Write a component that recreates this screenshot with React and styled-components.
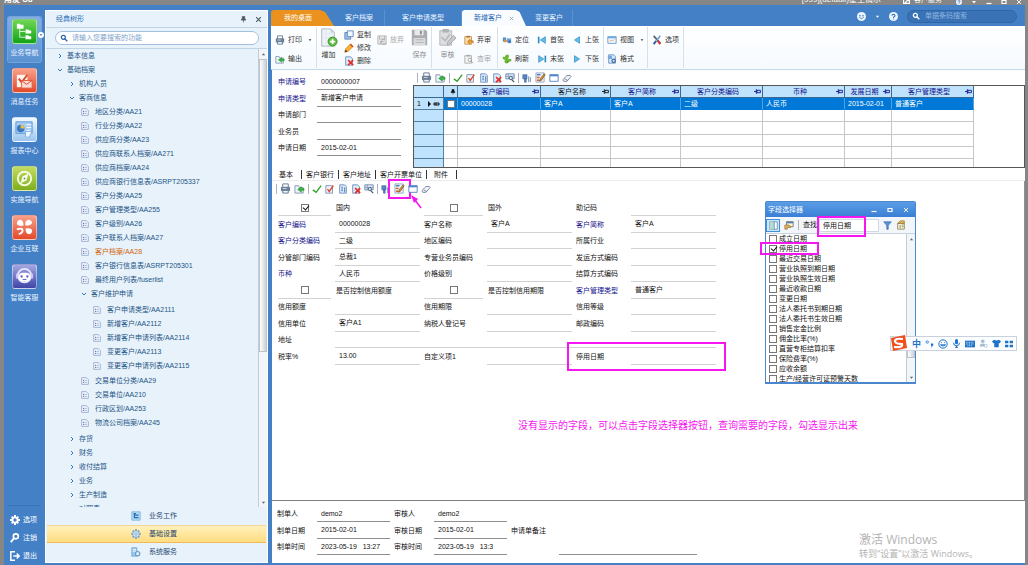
import React, { useId } from "react";
import styled, { createGlobalStyle, css } from "styled-components";

const GlobalStyle = createGlobalStyle`
    * {
        box-sizing: border-box;
    }
    html, body, #root {
        height: 100%;
        margin: 0;
    }
    body {
        font-family: "Liberation Sans", "Noto Sans CJK SC", sans-serif;
        font-size: 7px;
        line-height: 10px;
        color: #111;
        background: #868686;
        overflow: hidden;
    }
    button, input {
        font: inherit;
        color: inherit;
        border: 0;
        margin: 0;
        padding: 0;
        background: none;
        outline: none;
    }
    button {
        white-space: nowrap;
    }
    ul {
        list-style: none;
        margin: 0;
        padding: 0;
    }
    svg {
        display: block;
        flex: none;
    }
`;

//================================ Icons =================================

const doc = <path d="M2 1h6l2 2v8H2z" fill="#dcebfa" stroke="#6288bd" strokeWidth="1" />;

const shapes = {
    print: (
        <>
            <path d="M3 5V1h6v4" fill="#fff" stroke="#60738c" />
            <rect x="1" y="4" width="10" height="5" rx="1" fill="#6f8197" />
            <path d="M3 8h6v3H3z" fill="#eaf4ff" stroke="#60738c" />
            <path d="M3 6h4" stroke="#cfdbe8" />
        </>
    ),
    export: (
        <>
            <path d="M1 3h4l1 2h4v6H1z" fill="#edf4fb" stroke="#8296ae" />
            <path d="M11 6H8V4L4 7l4 3V8h3z" fill="#35b53b" stroke="#168226" strokeWidth="0.5" />
        </>
    ),
    copy: (
        <>
            <path d="M1 3h7v8H1z" fill="#a5c2e5" stroke="#557fb5" />
            <path d="M4 1h7v7H4z" fill="#eff7ff" stroke="#557fb5" />
        </>
    ),
    pencil: (
        <>
            <path d="M1 11l1-4 6-6 3 3-6 6z" fill="#ffb52b" stroke="#b4680f" strokeWidth="0.8" />
            <path d="M7 2l3 3 1-1-3-3z" fill="#d64534" />
            <path d="M1 11l1-3 2 2z" fill="#333" />
        </>
    ),
    delete: (
        <>
            {doc}
            <path d="M5 5l6 6M11 5l-6 6" stroke="#e5302a" strokeWidth="2" />
        </>
    ),
    abandon: (
        <>
            <path d="M1 1h10v10H1z" fill="#e6e6e6" stroke="#b4b4b4" />
            <path d="M3 1v4h6V1M4 11V8h5" fill="none" stroke="#b4b4b4" />
            <path d="M10 6a3 3 0 1 0 1 3" fill="none" stroke="#a4a4a4" />
        </>
    ),
    unaudit: (
        <>
            <path d="M1 2h8v9H1z" fill="#fbe3bb" stroke="#c98632" />
            <path d="M3 1h4v2H3z" fill="#a8703a" />
            <path d="M11 10V7H7V5L4 8l3 3V9" fill="#ee9a29" stroke="#9d5d15" strokeWidth="0.6" />
        </>
    ),
    checkAudit: (
        <>
            <path d="M1 2h8v9H1z" fill="#f1f1f1" stroke="#aaa" />
            <path d="M3 1h4v2H3z" fill="#aaa" />
            <circle cx="7" cy="7" r="2" fill="#fff" stroke="#999" />
            <path d="M8 8l3 3" stroke="#999" />
        </>
    ),
    locate: (
        <>
            <path d="M1 3h4v5H1z" fill="#4b8fd0" />
            <path d="M6 4h5v5H6z" fill="#6ea9de" />
            <circle cx="4" cy="7" r="2" fill="#e69133" />
            <circle cx="9" cy="8" r="2" fill="#3f7fc2" />
        </>
    ),
    refresh: (
        <>
            <path d="M1 6V3l2 1 2-3h3v3L6 5 5 6z" fill="#65b52d" />
            <path d="M11 6v3L9 8l-2 3H4V8l2-1 1-1z" fill="#509e26" />
            <path d="M2 5l8 3M7 2L4 10" stroke="#6dbb35" strokeWidth="3" />
        </>
    ),
    first: (
        <>
            <path d="M2 2v8" stroke="#2b8fc9" strokeWidth="2" />
            <path d="M10 2v8L4 6z" fill="#63bdea" stroke="#2585c0" strokeWidth="0.8" />
        </>
    ),
    last: (
        <>
            <path d="M10 2v8" stroke="#2b8fc9" strokeWidth="2" />
            <path d="M2 2v8l6-4z" fill="#63bdea" stroke="#2585c0" strokeWidth="0.8" />
        </>
    ),
    prev: <path d="M9 2v8L3 6z" fill="#63bdea" stroke="#2585c0" strokeWidth="0.8" />,
    next: <path d="M3 2v8l6-4z" fill="#63bdea" stroke="#2585c0" strokeWidth="0.8" />,
    view: (
        <>
            <path d="M1 2h10v8H1z" fill="#f3f9ff" stroke="#5d94cd" />
            <path d="M1 2h10v2H1z" fill="#6daae0" />
            <path d="M3 8l2-2 2 1 2-2" fill="none" stroke="#e2a548" />
        </>
    ),
    format: (
        <>
            {doc}
            <path d="M1 2h5v4H1z" fill="#7aa8dc" />
            <circle cx="8" cy="8" r="2" fill="#dcebfa" stroke="#426d9f" strokeWidth="1.5" />
        </>
    ),
    tools: (
        <>
            <path d="M2 1l8 9" stroke="#56616e" strokeWidth="2" />
            <path d="M10 1L6 6" stroke="#71a2d4" strokeWidth="2" />
            <path d="M5 7l-3 4" stroke="#3065a8" strokeWidth="2.5" />
            <path d="M7 7l3 4" stroke="#d63838" strokeWidth="2.5" />
        </>
    ),
    tick: <path d="M1 7l4 3 6-8" fill="none" stroke="#36a02c" strokeWidth="1.7" />,
    tickDoc: (
        <>
            <path d="M1 2h8v9H1z" fill="#eef4fc" stroke="#738cab" />
            <path d="M3 6l2 3 5-7" fill="none" stroke="#dc4430" strokeWidth="1.6" />
        </>
    ),
    docUp: (
        <>
            {doc}
            <path d="M4 4h2M4 6h2M4 8h2M8 4v6" stroke="#376fb4" strokeWidth="1" />
        </>
    ),
    searchTable: (
        <>
            <path d="M1 1h10v6H1z" fill="#e6f0fb" stroke="#5f7da3" />
            <path d="M1 4h10M4 1v6" stroke="#5f7da3" strokeWidth="0.7" />
            <circle cx="7" cy="6" r="2" fill="#cde5fa" stroke="#45566b" />
            <path d="M8 8l3 3" stroke="#45566b" strokeWidth="1.5" />
        </>
    ),
    attach: (
        <>
            <path d="M1 2h5v5H1zM3 7h2v4H3z" fill="#5a86c5" stroke="#35609d" strokeWidth="0.7" />
            <path d="M8 4v7M10 5v6" stroke="#5a78a4" />
        </>
    ),
    picker: (
        <>
            <path d="M1 1h9v10H1z" fill="#eef4fc" stroke="#93a7c4" />
            <path d="M2 3h4" stroke="#4477b8" strokeWidth="1.5" />
            <path d="M2 6h3M2 9h3" stroke="#d3662e" strokeWidth="1.5" />
            <path d="M5 10l1-3 4-5 1 1-4 6z" fill="#e5a12d" stroke="#74461d" strokeWidth="0.8" />
        </>
    ),
    window: (
        <>
            <path d="M1 2h10v8H1z" fill="#fff" stroke="#4a78bb" />
            <path d="M1 2h10v2H1z" fill="#4e86d2" />
        </>
    ),
    eraser: <path d="M1 8l5-5h4l1 1-5 6H2zM3 7l4 2" fill="#f3f5fb" stroke="#5c6a8b" strokeWidth="0.9" />,
    list: (
        <>
            <path d="M1 1h7l3 3v7H1z" fill="#f5f9ff" stroke="#7a92c0" strokeWidth="1" />
            <path d="M3 5h2M3 8h2" stroke="#705a86" strokeWidth="1.5" />
            <path d="M6 5h3M6 8h3" stroke="#6fa1db" strokeWidth="1" />
        </>
    ),
    right: <path d="M4 2l4 4-4 4" fill="none" stroke="#2f77c4" strokeWidth="2" />,
    down: <path d="M2 4l4 4 4-4" fill="none" stroke="#2f77c4" strokeWidth="2" />,
    caret: <path d="M2 4h8L6 9z" fill="currentColor" />,
    caretUp: <path d="M2 8h8L6 3z" fill="currentColor" />,
    close: <path d="M2 2l8 8M10 2l-8 8" fill="none" stroke="currentColor" strokeWidth="1.8" />,
    pin: <path d="M4 1h4v4h1l1 2H2l1-2h1zM6 7v4" fill="currentColor" stroke="currentColor" strokeWidth="1.2" />,
    sidePin: <path d="M0 6h4M4 2v8M5 4h6v4H5z" fill="none" stroke="currentColor" strokeWidth="1.5" />,
    search: (
        <>
            <circle cx="5" cy="5" r="3" fill="none" stroke="currentColor" strokeWidth="1.8" />
            <path d="M7 7l4 4" stroke="currentColor" strokeWidth="2" />
        </>
    ),
    gear: (
        <>
            <path d="M6 0v12M0 6h12M2 2l8 8M10 2l-8 8" stroke="currentColor" strokeWidth="2.4" />
            <circle cx="6" cy="6" r="3" fill="none" stroke="currentColor" strokeWidth="2.5" />
            <circle cx="6" cy="6" r="2" fill="#4480c6" />
        </>
    ),
    key: (
        <>
            <circle cx="7" cy="4" r="3" fill="none" stroke="currentColor" strokeWidth="2" />
            <path d="M5 6l-4 5" stroke="currentColor" strokeWidth="2.4" />
        </>
    ),
    exit: <path d="M6 1H1v10h5M4 6h7M8 3l3 3-3 3" fill="none" stroke="currentColor" strokeWidth="1.8" />,
    blueGear: (
        <>
            <path d="M6 0v12M0 6h12M2 2l8 8M10 2l-8 8" stroke="#6f9fcb" strokeWidth="2" />
            <circle cx="6" cy="6" r="4" fill="#d9ecfb" stroke="#6f9fcb" />
            <circle cx="6" cy="6" r="1.5" fill="#fff" stroke="#6f9fcb" />
        </>
    ),
    work: (
        <>
            <path d="M1 1h10v10H1z" fill="#b7daf5" stroke="#78b1df" />
            <path d="M3 3h3M4 3v5h3M4 5h3M7 5h2M7 8h2" fill="none" stroke="#226bb0" strokeWidth="1.4" />
        </>
    ),
    service: (
        <>
            <path d="M1 1h6v10H1z" fill="#9bc8ec" stroke="#6aa3d6" />
            <path d="M2 3h4M2 5h4" stroke="#fff" />
            <circle cx="8" cy="8" r="2.6" fill="#dceffc" stroke="#6d9dc8" strokeWidth="1.4" />
        </>
    ),
    smile: (
        <>
            <circle cx="6" cy="6" r="6" fill="#eaf4ff" />
            <circle cx="4" cy="5" r="1" fill="#3569a5" />
            <circle cx="8" cy="5" r="1" fill="#3569a5" />
            <path d="M3 7q3 4 6 0" fill="none" stroke="#3569a5" />
        </>
    ),
    help: (
        <>
            <circle cx="6" cy="6" r="6" fill="#eaf4ff" />
            <path d="M4 5q0-2 2-2t2 2q0 1-2 2v1M6 9v1" fill="none" stroke="#3569a5" strokeWidth="1.4" />
        </>
    ),
    columns: (
        <>
            <path d="M1 1h10v10H1z" fill="#fff" stroke="#57809f" />
            <path d="M1 1h6v10H1z" fill="#b3dcd5" />
            <path d="M7 1v10" stroke="#57809f" />
        </>
    ),
    props: (
        <>
            <path d="M3 2h8v6H3z" fill="#fff1c9" stroke="#7d7457" />
            <path d="M3 2h8v2H3z" fill="#4e7ec4" />
            <path d="M1 6h5l2 3H4v2H1z" fill="#e3b161" stroke="#89602a" strokeWidth="0.7" />
        </>
    ),
    filter: <path d="M1 1h10L7 6v5H5V6z" fill="#5c92da" stroke="#345fa5" strokeWidth="0.8" />,
    note: (
        <>
            <path d="M2 4h8v7H2z" fill="#f7f0d5" stroke="#8b8258" />
            <path d="M2 4l3-3h5v3z" fill="#e8ba4e" stroke="#81662b" strokeWidth="0.7" />
            <path d="M5 6v4M7 6h2M7 8h2" stroke="#7a8c6a" />
        </>
    ),
    max: <path d="M2 3h8v6H2z" fill="none" stroke="currentColor" strokeWidth="2.4" />,
    min: <path d="M1 9h10" stroke="currentColor" strokeWidth="2.4" />,
    service2: <path d="M1 1h10v10H1zM3 11l6-7M6 4h3v3" fill="none" stroke="currentColor" strokeWidth="2" />,
    punct: (
        <>
            <circle cx="3" cy="4" r="1.6" fill="none" stroke="#1c73c9" />
            <path d="M8 6h3v2l-2 3H8l1-2H8z" fill="#1c73c9" />
        </>
    ),
    face: (
        <>
            <circle cx="6" cy="6" r="5" fill="none" stroke="#1c73c9" strokeWidth="1.2" />
            <path d="M4 4v1M8 4v1M3 7q3 3 6 0z" fill="none" stroke="#1c73c9" strokeWidth="1.2" />
        </>
    ),
    mic: (
        <>
            <rect x="4" y="0" width="4" height="7" rx="2" fill="#1c73c9" />
            <path d="M2 5q0 4 4 4t4-4M6 9v3M4 11h4" fill="none" stroke="#1c73c9" strokeWidth="1.3" />
        </>
    ),
    keyboard: (
        <>
            <rect x="0" y="2" width="12" height="8" fill="#1c73c9" />
            <path d="M1 4h10M1 6h10M3 8h6" stroke="#fff" strokeDasharray="1 1" />
        </>
    ),
    person: (
        <>
            <circle cx="5" cy="3" r="2.4" fill="#a6bbd1" />
            <path d="M1 10q0-4 4-4t4 2v2z" fill="#a6bbd1" />
            <circle cx="9" cy="9" r="2" fill="#fff" stroke="#a6bbd1" />
        </>
    ),
    shirt: <path d="M0 3l3-2q3 2 6 0l3 2-2 3-1-1v6H3V5L2 6z" fill="#1c73c9" />,
    apps: <path d="M0 1h5v4H0zM7 1h5v4H7zM0 7h5v4H0zM7 7h5v4H7z" fill="#1c73c9" />,
};

const Icon = ({ name, size = 10 }) => (
    <svg width={size} height={size} viewBox="0 0 12 12" aria-hidden="true">
        {shapes[name]}
    </svg>
);

const bigShapes = {
    add: (
        <>
            <path d="M3 1h10l4 4v15H3z" fill="#eef3f8" stroke="#a3afbd" />
            <path d="M3 6h14M3 11h14M8 1v19" stroke="#e2e8ee" />
            <path d="M13 1v4h4z" fill="#c4ced9" />
            <circle cx="15" cy="15" r="5" fill="#5cb93a" stroke="#3d922a" />
            <path d="M15 12v6M12 15h6" stroke="#fff" strokeWidth="2" />
        </>
    ),
    save: (
        <>
            <path d="M2 2h15l2 2v15H2z" fill="#a9acb1" />
            <path d="M5 2h10v6H5z" fill="#e8e9eb" />
            <path d="M11 3h2v4h-2z" fill="#888" />
            <path d="M4 11h13v8H4z" fill="#d9dbde" />
            <path d="M6 13h9M6 16h9" stroke="#b4b4b4" />
        </>
    ),
    audit: (
        <>
            <path d="M2 3h13v16H2z" fill="#dcdee1" stroke="#b3b6ba" />
            <path d="M5 1h7v4H5z" fill="#b0b3b7" />
            <path d="M4 10l4 4 5-7" fill="none" stroke="#bbb" strokeWidth="2" />
            <path d="M10 19l1-4 6-7 3 3-7 7z" fill="#c7c9cc" stroke="#a7a9ac" />
        </>
    ),
};

const BigIcon = ({ name }) => (
    <svg width="19" height="19" viewBox="0 0 21 21" aria-hidden="true">
        {bigShapes[name]}
    </svg>
);

//================================ Frame =================================

const Page = styled.div`
    height: 100vh;
    display: flex;
    flex-direction: column;
`;

const TitleBar = styled.header`
    height: 5px;
    padding: 0 6px 0 4px;
    display: flex;
    align-items: flex-end;
    gap: 22px;
    color: #fff;
    font-size: 8px;
    overflow: hidden;
    white-space: nowrap;
`;

const Brand = styled.span`
    flex: 1;
    font-weight: bold;
`;

const ServiceLink = styled.span`
    display: flex;
    align-items: center;
    gap: 4px;
    font-size: 7px;
`;

const WindowButtons = styled.div`
    display: flex;
    gap: 9px;
    margin-left: -8px;
`;

const Body = styled.div`
    flex: 1;
    min-height: 0;
    display: flex;
    margin: 0 3px 0 4px;
    background: #4480c6;
`;

//================================ Rail =================================

const Rail = styled.nav`
    width: 41px;
    flex: none;
    padding: 12px 4px 0;
    display: flex;
    flex-direction: column;
    gap: 4px;
    color: #fff;
`;

const RailItem = styled.button`
    position: relative;
    height: 45px;
    padding-top: 2px;
    display: flex;
    flex-direction: column;
    align-items: center;
    gap: 4px;
    border-radius: 2px;
    color: #eaf4ff;
    ${({ $active }) => $active && css`
        background: linear-gradient(#84afdf, #5c92d2);
        box-shadow: 0 0 0 1px #72a5dc;
    `}
`;

const RailTile = styled.span`
    width: 25px;
    height: 25px;
    display: flex;
    align-items: center;
    justify-content: center;
    border-radius: 3px;
    border: 1px solid rgba(255, 255, 255, 0.45);
    background: ${({ $bg }) => $bg};
`;

const RailHandle = styled.span`
    position: absolute;
    right: -3px;
    top: 15px;
    width: 6px;
    height: 6px;
    display: grid;
    place-items: center;
    border-radius: 50%;
    background: #fff;
    color: #2f6cb2;
`;

const RailFooter = styled.div`
    margin-top: auto;
    padding: 5px 0 0 2px;
    border-top: 1px solid #3b74b6;
`;

const RailLink = styled.button`
    height: 18px;
    display: flex;
    align-items: center;
    gap: 3px;
`;

const railShapes = [
    <>
        <path d="M3 3h3l1 1h3v4H3zM12 9h3l1 1h2v3h-6zM12 15h3l1 1h2v3h-6z" fill="#fff" />
        <path d="M6 8v9h6M6 11h6" fill="none" stroke="#d8f5d2" />
    </>,
    <>
        <path d="M3 5h11v13H3z" fill="#fff3ee" />
        <path d="M5 9l3 4 6-8" fill="none" stroke="#d84a2c" strokeWidth="2" />
        <path d="M8 11h11v8H8z" fill="#fbdad0" stroke="#e05c3c" />
        <path d="M8 11l5 4 6-4" fill="none" stroke="#d84a2c" />
    </>,
    <>
        <path d="M2 3h17v12H2z" fill="#a6cdf4" stroke="#5e98d6" />
        <circle cx="7" cy="10" r="4" fill="#3a79c5" />
        <path d="M7 10V6a4 4 0 0 1 4 4z" fill="#f0c043" />
        <path d="M13 6h5M13 9h5M13 12h4" stroke="#fff" />
        <path d="M12 13h7l-3 6h-4z" fill="#eef7ff" stroke="#7fb0e2" />
    </>,
    <>
        <circle cx="11" cy="11" r="7" fill="none" stroke="#f3fbdc" strokeWidth="2" />
        <path d="M15 6l-2 7-6 3 2-7z" fill="#fff" />
        <circle cx="11" cy="11" r="1" fill="#6d9a1c" />
    </>,
    <>
        <path d="M6 3q4 0 4 6-6 1-7-2 0-3 3-4zM15 3q-4 1-3 6 6 0 7-3-1-3-4-3zM12 12q6-1 7 2 0 4-3 4-4 0-4-6z" fill="#fff" />
        <path d="M3 13q6-2 6 1t-4 4" fill="none" stroke="#fff" strokeWidth="2" />
    </>,
    <>
        <circle cx="11" cy="10" r="7" fill="none" stroke="#e8e6ff" strokeWidth="2" />
        <rect x="5" y="7" width="12" height="9" rx="4" fill="#fff" />
        <circle cx="8" cy="11" r="1.2" fill="#5a57bd" />
        <circle cx="14" cy="11" r="1.2" fill="#5a57bd" />
        <path d="M9 14h4" stroke="#5a57bd" />
        <path d="M3 8v5M19 8v5" stroke="#c9c6ff" strokeWidth="2" />
    </>,
];

const railItems = [
    ["业务导航", "linear-gradient(#6fd653, #14a318)"],
    ["消息任务", "linear-gradient(#f9a08a, #e2492b)"],
    ["报表中心", "linear-gradient(#f2f9ff, #9cc6ef)"],
    ["实施导航", "linear-gradient(#c3dc62, #7fae1d)"],
    ["企业互联", "linear-gradient(#f9a08a, #e2492b)"],
    ["智能客服", "linear-gradient(#a3a9e0, #4144a8)"],
];

const SideRail = () => (
    <Rail>
        {railItems.map(([label, bg], i) => (
            <RailItem key={label} $active={i === 0}>
                <RailTile $bg={bg}>
                    <svg width="21" height="21" viewBox="0 0 22 22">{railShapes[i]}</svg>
                </RailTile>
                {label}
                {i === 0 && <RailHandle><Icon name="caret" size={4} /></RailHandle>}
            </RailItem>
        ))}
        <RailFooter>
            <RailLink><Icon name="gear" />选项</RailLink>
            <RailLink><Icon name="key" />注销</RailLink>
            <RailLink><Icon name="exit" />退出</RailLink>
        </RailFooter>
    </Rail>
);

//================================ Tree =================================

const TreePanel = styled.aside`
    width: 223px;
    flex: none;
    margin: 5px 3px 2px 0;
    display: flex;
    flex-direction: column;
    background: #e8f2fb;
    border: 1px solid #fff;
    color: #1d5585;
`;

const TreeHeader = styled.div`
    height: 17px;
    padding: 0 5px 0 10px;
    display: flex;
    align-items: center;
    gap: 8px;
    color: #2a6db5;
    border-bottom: 1px solid #c0d4e6;
`;

const HeaderButton = styled.button`
    color: #4a5560;
    ${({ $push }) => $push && "margin-left: auto;"}
`;

const SearchBox = styled.label`
    height: 14px;
    margin: 3px 8px 3px 9px;
    padding: 0 4px;
    display: flex;
    align-items: center;
    gap: 4px;
    border: 1px solid #a3c1de;
    border-radius: 7px;
    background: #fff;
    color: #2c62ab;
    input {
        flex: 1;
        min-width: 0;
    }
    input::placeholder {
        color: #7fa3cb;
    }
`;

const TreeBody = styled.div`
    flex: 1;
    min-height: 0;
    display: flex;
    border-top: 1px solid #c0d4e6;
`;

const TreeScroll = styled.div`
    flex: 1;
    overflow: hidden;
    padding-left: 11px;
`;

const TreeList = styled.ul`
    ul {
        margin-bottom: 2px;
        padding-left: 12px;
    }
    ul ul ul {
        margin-top: 2px;
        margin-bottom: 1px;
    }
`;

const TreeRow = styled.button`
    height: 14px;
    display: flex;
    align-items: center;
    gap: ${({ $leaf }) => ($leaf ? 6 : 4)}px;
    color: ${({ $active }) => ($active ? "#d0660a" : "inherit")};
`;

const ScrollBar = styled.div`
    width: 9px;
    flex: none;
    display: flex;
    flex-direction: column;
    align-items: center;
    background: #f3f6f9;
    border-left: 1px solid #c3ccd6;
    color: #5c6570;
`;

const ScrollButton = styled.button`
    width: 100%;
    height: 10px;
    display: grid;
    place-items: center;
    &:last-child {
        margin-top: auto;
    }
`;

const ScrollThumb = styled.span`
    width: 100%;
    flex: 0 0 ${({ $size }) => $size};
    margin-top: ${({ $start }) => $start || "0"};
    border: 1px solid #bcc3cb;
    background: linear-gradient(90deg, #fff, #ccd1d8);
`;

const SectionList = styled.div`
    display: flex;
    flex-direction: column;
    padding: 0 1px 1px;
`;

const SectionButton = styled.button`
    height: 18px;
    padding-left: 84px;
    display: flex;
    align-items: center;
    gap: 8px;
    color: #24466f;
    ${({ $active }) => $active && css`
        background: linear-gradient(#fff1c0, #ffdc7c);
        box-shadow: inset 0 -1px #efb95a, inset 0 1px #f4d796;
    `}
`;

const tree = [
    { label: "基本信息" },
    {
        label: "基础档案",
        children: [
            { label: "机构人员" },
            {
                label: "客商信息",
                children: [
                    "地区分类/AA21", "行业分类/AA22", "供应商分类/AA23", "供应商联系人档案/AA271",
                    "供应商档案/AA24", "供应商银行信息表/ASRPT205337", "客户分类/AA25",
                    "客户管理类型/AA255", "客户级别/AA26", "客户联系人档案/AA27", "客户档案/AA28",
                    "客户银行信息表/ASRPT205301", "最终用户列表/fuserlist",
                    {
                        label: "客户维护申请",
                        children: [
                            "客户申请类型/AA2111", "新增客户/AA2112", "新增客户申请列表/AA2114",
                            "变更客户/AA2113", "变更客户申请列表/AA2115",
                        ],
                    },
                    "交易单位分类/AA29", "交易单位/AA210", "行政区划/AA253", "物流公司档案/AA245",
                ],
            },
            { label: "存货" }, { label: "财务" }, { label: "收付结算" }, { label: "业务" },
            { label: "生产制造" }, { label: "对照表" },
        ],
    },
];

const TreeNode = ({ node }) => {
    if (typeof node === "string") {
        return (
            <li>
                <TreeRow $leaf $active={node === "客户档案/AA28"}><Icon name="list" size={8} />{node}</TreeRow>
            </li>
        );
    }
    return (
        <li>
            <TreeRow><Icon name={node.children ? "down" : "right"} size={6} />{node.label}</TreeRow>
            {node.children && (
                <ul>
                    {node.children.map((child) => <TreeNode key={child.label || child} node={child} />)}
                </ul>
            )}
        </li>
    );
};

const TreeSide = () => (
    <TreePanel>
        <TreeHeader>
            经典树形
            <HeaderButton $push aria-label="固定"><Icon name="pin" size={7} /></HeaderButton>
            <HeaderButton aria-label="关闭"><Icon name="close" size={7} /></HeaderButton>
        </TreeHeader>
        <SearchBox>
            <Icon name="search" size={8} />
            <input placeholder="请输入您要搜索的功能" aria-label="搜索功能" />
        </SearchBox>
        <TreeBody>
            <TreeScroll>
                <TreeList>
                    {tree.map((node) => <TreeNode key={node.label} node={node} />)}
                </TreeList>
            </TreeScroll>
            <ScrollBar>
                <ScrollButton aria-label="向上"><Icon name="caretUp" size={5} /></ScrollButton>
                <ScrollThumb $size="64%" />
                <ScrollButton aria-label="向下"><Icon name="caret" size={5} /></ScrollButton>
            </ScrollBar>
        </TreeBody>
        <SectionList>
            <SectionButton><Icon name="work" />业务工作</SectionButton>
            <SectionButton $active><Icon name="blueGear" />基础设置</SectionButton>
            <SectionButton><Icon name="service" />系统服务</SectionButton>
        </SectionList>
    </TreePanel>
);

//================================ Tab strip =================================

const Main = styled.main`
    flex: 1;
    min-width: 0;
    display: flex;
    flex-direction: column;
    position: relative;
    padding-bottom: 2px;
`;

const TabStrip = styled.div`
    height: 21px;
    padding-top: 5px;
    display: flex;
    color: #eaf4ff;
`;

const Tab = styled.button`
    padding: 0 ${({ $pad }) => $pad || 17}px;
    border-right: 1px solid #5a92d0;
`;

const HomeTab = styled(Tab)`
    width: 63px;
    padding: 0 9px 0 0;
    border: 0;
    border-radius: 3px 0 0 0;
    background: #ea921d;
    color: #fff;
    clip-path: polygon(0 0, 78% 0, 86% 12%, 100% 100%, 0 100%);
`;

const ActiveTab = styled(Tab)`
    padding: 0 12px;
    display: flex;
    align-items: center;
    gap: 7px;
    border: 0;
    border-radius: 3px 0 0 0;
    background: #f8fcff;
    color: #1f64b0;
    clip-path: polygon(0 0, 84% 0, 90% 12%, 100% 100%, 0 100%);
    svg {
        color: #8e9aa6;
    }
`;

const TabTools = styled.div`
    margin-left: auto;
    padding-right: 8px;
    display: flex;
    align-items: center;
    gap: 9px;
    height: 12px;
    button {
        color: #fff;
    }
`;

const CodeSearch = styled.label`
    width: 110px;
    height: 13px;
    padding: 0 4px;
    display: flex;
    align-items: center;
    gap: 5px;
    border-radius: 7px;
    border: 1px solid #3166a6;
    background: #3972b5;
    color: #fff;
    input {
        flex: 1;
        min-width: 0;
    }
    input::placeholder {
        color: #8db5e0;
    }
`;

const Tabs = () => (
    <TabStrip>
        <HomeTab>我的桌面</HomeTab>
        <Tab $pad={11}>客户档案</Tab>
        <Tab>客户申请类型</Tab>
        <ActiveTab>新增客户<Icon name="close" size={5} /></ActiveTab>
        <Tab $pad={9}>变更客户</Tab>
        <TabTools>
            <button aria-label="表情"><Icon name="smile" size={9} /></button>
            <button aria-label="更多"><Icon name="caret" size={5} /></button>
            <button aria-label="帮助"><Icon name="help" size={9} /></button>
            <CodeSearch>
                <Icon name="search" size={8} />
                <input placeholder="单据条码搜索" aria-label="单据条码搜索" />
            </CodeSearch>
        </TabTools>
    </TabStrip>
);

//================================ Toolbar =================================

const Toolbar = styled.div`
    height: 44px;
    flex: none;
    padding: 1px 0;
    display: flex;
    background: linear-gradient(#fff, #f5faff);
    border-bottom: 1px solid #c5d8e8;
`;

const ToolGroup = styled.div`
    display: flex;
    gap: ${({ $gap }) => $gap || 6}px;
    padding: 0 ${({ $pad }) => $pad || 4}px;
    border-right: 1px solid #d5e1ec;
`;

const ToolColumn = styled.div`
    display: flex;
    flex-direction: column;
    padding: ${({ $dense }) => ($dense ? "1px 0" : "3px 0 0")};
    justify-content: ${({ $top }) => ($top ? "flex-start" : "space-between")};
`;

const Tool = styled.button`
    height: ${({ $dense }) => ($dense ? 13 : 20)}px;
    display: flex;
    align-items: center;
    gap: 3px;
    color: ${({ disabled }) => (disabled ? "#a8a8a8" : "#333")};
`;

const BigTool = styled.button`
    padding: 1px 0 8px;
    display: flex;
    flex-direction: column;
    align-items: center;
    justify-content: space-between;
    color: ${({ disabled }) => (disabled ? "#8d8d8d" : "#333")};
`;

const CaretGap = styled.span`
    margin-left: 3px;
`;

const tool = (icon, label, extra = {}) => (
    <Tool key={label} disabled={extra.off} $dense={extra.dense}>
        <Icon name={icon} size={10} />
        {label}
        {extra.caret && <CaretGap><Icon name="caret" size={4} /></CaretGap>}
    </Tool>
);

const MainToolbar = () => (
    <Toolbar>
        <ToolGroup>
            <ToolColumn>{tool("print", "打印", { caret: true })}{tool("export", "输出")}</ToolColumn>
        </ToolGroup>
        <ToolGroup $pad={2}>
            <BigTool><BigIcon name="add" />增加</BigTool>
            <ToolColumn $dense>
                {tool("copy", "复制", { dense: true })}
                {tool("pencil", "修改", { dense: true })}
                {tool("delete", "删除", { dense: true })}
            </ToolColumn>
            <ToolColumn $top>{tool("abandon", "放弃", { off: true })}</ToolColumn>
            <BigTool disabled><BigIcon name="save" />保存</BigTool>
        </ToolGroup>
        <ToolGroup $gap={7} $pad={6}>
            <BigTool disabled><BigIcon name="audit" />审核</BigTool>
            <ToolColumn>{tool("unaudit", "弃审")}{tool("checkAudit", "查审", { off: true })}</ToolColumn>
        </ToolGroup>
        <ToolGroup $gap={8}>
            <ToolColumn>{tool("locate", "定位")}{tool("refresh", "刷新")}</ToolColumn>
            <ToolColumn>{tool("first", "首张")}{tool("last", "末张")}</ToolColumn>
            <ToolColumn>{tool("prev", "上张")}{tool("next", "下张")}</ToolColumn>
        </ToolGroup>
        <ToolGroup $pad={3}>
            <ToolColumn>{tool("view", "视图", { caret: true })}{tool("format", "格式")}</ToolColumn>
        </ToolGroup>
        <ToolGroup>
            <ToolColumn $top>{tool("tools", "选项")}</ToolColumn>
        </ToolGroup>
    </Toolbar>
);

//================================ Small icon bar =================================

const IconBar = styled.div`
    height: 15px;
    flex: none;
    display: flex;
    align-items: center;
    gap: 3px;
    padding-left: 4px;
`;

const BarLine = styled.span`
    width: 1px;
    height: 10px;
    background: #aab2bb;
`;

const BarButton = styled.button`
    position: relative;
`;

const Mark = styled.span`
    position: absolute;
    border: 2px solid #f516f0;
    pointer-events: none;
`;

const PickerMark = styled(Mark)`
    inset: -4px -6px -5px;
`;

const Pointer = styled.svg`
    position: absolute;
    left: 17px;
    top: 12px;
`;

const GridIcons = ({ marked }) => (
    <IconBar>
        <BarLine />
        <BarButton aria-label="打印"><Icon name="print" size={11} /></BarButton>
        <BarButton aria-label="输出"><Icon name="export" size={11} /></BarButton>
        <BarLine />
        {["tick", "tickDoc", "docUp", "delete", "searchTable"].map((name) => (
            <BarButton key={name} aria-label={name}><Icon name={name} /></BarButton>
        ))}
        <BarLine />
        <BarButton aria-label="附件"><Icon name="attach" /></BarButton>
        <BarButton aria-label="字段选择器">
            <Icon name="picker" size={11} />
            {marked && (
                <>
                    <PickerMark />
                    <Pointer width="12" height="14" viewBox="0 0 12 14">
                        <path d="M10 13L4 5" stroke="#f516f0" strokeWidth="1.5" />
                        <path d="M0 0l7 4-4 4z" fill="#f516f0" />
                    </Pointer>
                </>
            )}
        </BarButton>
        <BarButton aria-label="窗口"><Icon name="window" /></BarButton>
        <BarButton aria-label="清除"><Icon name="eraser" /></BarButton>
    </IconBar>
);

//================================ Forms =================================

const Sheet = styled.section`
    flex: 1;
    min-height: 0;
    display: flex;
    flex-direction: column;
    background: #fff;
    margin-left: 1px;
`;

const TopArea = styled.div`
    height: 98px;
    flex: none;
    display: flex;
`;

const HeadForm = styled.form`
    width: 123px;
    flex: none;
    margin: 4px 12px 0 6px;
    display: grid;
    grid-template-columns: 39px 1fr;
    grid-auto-rows: 16px 17px;
`;

const FieldLabel = styled.label`
    position: relative;
    align-self: center;
    white-space: nowrap;
    color: ${({ $blue }) => ($blue ? "#12128c" : "#111")};
`;

const FieldInput = styled.input`
    min-width: 0;
    width: 100%;
    padding-left: ${({ $pad }) => $pad || 4}px;
    border-bottom: 1px solid ${({ $soft }) => ($soft ? "#d2d2d2" : "#8e8e8e")};
    ${({ $wide }) => $wide && "grid-column: span 5;"}
`;

const Field = ({ label, value = "", blue, soft, wide, children }) => {
    const id = useId();
    return (
        <>
            <FieldLabel htmlFor={id} $blue={blue}>{label}{children}</FieldLabel>
            <FieldInput id={id} defaultValue={value} $soft={soft} $wide={wide} />
        </>
    );
};

const CheckCell = styled.div`
    display: grid;
    place-items: center;
    border-bottom: 1px solid #d2d2d2;
`;

const CheckBox = styled.input.attrs({ type: "checkbox" })`
    appearance: none;
    display: block;
    flex: none;
    width: 8px;
    height: 8px;
    border: 1px solid #777;
    background: #fff;
    &:checked::after {
        content: "";
        display: block;
        width: 3px;
        height: 5px;
        margin: -1px 0 0 2px;
        border: solid #111;
        border-width: 0 1px 1px 0;
        transform: rotate(40deg);
    }
`;

const CheckLabel = styled(FieldLabel)`
    padding-left: 1px;
`;

const CheckField = ({ label, checked }) => {
    const id = useId();
    return (
        <>
            <CheckCell><CheckBox id={id} defaultChecked={checked} /></CheckCell>
            <CheckLabel htmlFor={id}>{label}</CheckLabel>
        </>
    );
};

const DetailForm = styled.form`
    display: grid;
    grid-template-columns: 53px 85px 59px 85px 51px 85px;
    column-gap: 4px;
    grid-auto-rows: 16px 17px;
    padding: 4px 0 0 6px;
`;

const StopDateMark = styled(Mark)`
    left: -9px;
    top: -10px;
    width: 159px;
    height: 29px;
`;

const Detail = () => (
    <DetailForm>
        <CheckField label="国内" checked />
        <CheckField label="国外" />
        <Field soft label="助记码" />

        <Field soft blue label="客户编码" value="00000028" />
        <Field soft label="客户名称" value="客户A" />
        <Field soft blue label="客户简称" value="客户A" />

        <Field soft blue label="客户分类编码" value="二级" />
        <Field soft label="地区编码" />
        <Field soft label="所属行业" />

        <Field soft label="分管部门编码" value="总裁1" />
        <Field soft label="专营业务员编码" />
        <Field soft label="发运方式编码" />

        <Field soft blue label="币种" value="人民币" />
        <Field soft label="价格级别" />
        <Field soft label="结算方式编码" />

        <CheckField label="是否控制信用额度" />
        <CheckField label="是否控制信用期限" />
        <Field soft blue label="客户管理类型" value="普通客户" />

        <Field soft label="信用额度" />
        <Field soft label="信用期限" />
        <Field soft label="信用等级" />

        <Field soft label="信用单位" value="客户A1" />
        <Field soft label="纳税人登记号" />
        <Field soft label="邮政编码" />

        <Field soft wide label="地址" />

        <Field soft label="税率%" value="13.00" />
        <Field soft label="自定义项1" />
        <Field soft label="停用日期"><StopDateMark /></Field>
    </DetailForm>
);

//================================ Grid =================================

const GridSide = styled.div`
    flex: 1;
    min-width: 0;
    display: flex;
    flex-direction: column;
`;

const GridFrame = styled.div`
    flex: 1;
    min-height: 0;
    overflow: hidden;
    border: 1px solid #555;
`;

const Grid = styled.table`
    width: 560px;
    table-layout: fixed;
    border-collapse: separate;
    border-spacing: 0;
    white-space: nowrap;
    th, td {
        height: 12px;
        padding: 0 3px;
        border: 1px solid #c6c6c6;
        border-top: 0;
        border-left: 0;
        text-align: left;
        font-weight: normal;
        line-height: 10px;
    }
    tr:nth-child(3) td {
        height: 13px;
    }
    thead th {
        padding: 0 1px;
        background: #bfe3fd;
        border-color: #3a6a94;
        text-align: center;
    }
    tbody th {
        background: #bfe3fd;
        border-color: #557f9f;
    }
`;

const SelectedRow = styled.tr`
    && td {
        background: #0078d7;
        color: #fff;
        border-right-color: #5a9fd8;
        border-bottom-color: #0078d7;
    }
`;

const HeadCell = styled.div`
    display: flex;
    align-items: center;
    color: ${({ $dark }) => ($dark ? "#111" : "#12128c")};
    justify-content: flex-end;
    span {
        flex: 1;
    }
`;

const RowHead = styled.div`
    display: flex;
    align-items: center;
    justify-content: space-between;
`;

const columns = [
    ["客户编码", 83, "00000028"],
    ["客户名称", 70, "客户A"],
    ["客户简称", 70, "客户A"],
    ["客户分类编码", 82, "二级"],
    ["币种", 82, "人民币"],
    ["发展日期", 47, "2015-02-01"],
    ["客户管理类型", 82, "普通客户"],
];

const CustomerGrid = () => (
    <GridFrame>
        <Grid>
            <colgroup>
                <col width="30" />
                <col width="14" />
                {columns.map(([label, width]) => <col key={label} width={width} />)}
            </colgroup>
            <thead>
                <tr>
                    <th />
                    <th><HeadCell $dark><Icon name="pin" size={6} /></HeadCell></th>
                    {columns.map(([label]) => (
                        <th key={label}>
                            <HeadCell $dark={label === "客户名称"}>
                                <span>{label}</span>
                                <Icon name="sidePin" size={7} />
                            </HeadCell>
                        </th>
                    ))}
                </tr>
            </thead>
            <tbody>
                <SelectedRow>
                    <th>
                        <RowHead>
                            1
                            <svg width="13" height="6" viewBox="0 0 13 6">
                                <path d="M1 0v6l3-3z" fill="#111" />
                                <path d="M6 3h2M8 1v4M9 2h3v2H9z" fill="none" stroke="#111" />
                            </svg>
                        </RowHead>
                    </th>
                    <td><CheckBox aria-label="选择第1行" /></td>
                    {columns.map(([label, , value]) => <td key={label}>{value}</td>)}
                </SelectedRow>
                {[2, 3, 4, 5, 6].map((row) => (
                    <tr key={row}>
                        <th />
                        <td />
                        {columns.map(([label]) => <td key={label} />)}
                    </tr>
                ))}
            </tbody>
        </Grid>
    </GridFrame>
);

const SheetTabs = styled.div`
    height: 13px;
    flex: none;
    display: flex;
    align-items: center;
    border-bottom: 1px solid #ececec;
    button {
        height: 9px;
        line-height: 9px;
        padding: 0 4px 0 4px;
        border-right: 1px solid #333;
    }
    button:first-child {
        padding: 0 8px 0 7px;
    }
    button:last-child {
        padding: 0 8px 0 7px;
    }
`;

const DetailPane = styled.div`
    flex: 1;
    min-height: 0;
    border-right: 1px solid #8b9197;
    border-bottom: 1px solid #7d7d7d;
`;

const Remark = styled.p`
    margin: 54px 0 0 246px;
    font-size: 10px;
    line-height: 14px;
    color: #f516f0;
`;

const Footer = styled.form`
    flex: none;
    padding: 5px 0 8px 5px;
    display: grid;
    grid-template-columns: 36px 73px 36px 73px 44px minmax(0, 138px);
    column-gap: 4px;
    grid-auto-rows: 16px 17px;
`;

const RemarkLabel = styled(FieldLabel)`
    grid-area: 2 / 5;
`;

const RemarkInput = styled(FieldInput)`
    grid-area: 3 / 6;
`;

//================================ Field picker =================================

const Dialog = styled.section`
    position: absolute;
    left: 494px;
    top: 196px;
    width: 151px;
    height: 183px;
    display: flex;
    flex-direction: column;
    background: #fff;
    border: 1px solid #4a87cc;
    border-bottom-width: 2px;
    border-radius: 2px 2px 0 0;
`;

const DialogTitle = styled.div`
    height: 15px;
    flex: none;
    padding: 0 6px 0 2px;
    display: flex;
    align-items: center;
    gap: 10px;
    color: #fff;
    background: linear-gradient(#5a9de6, #3a7fd5);
    span {
        flex: 1;
    }
`;

const DialogBar = styled.div`
    height: 17px;
    flex: none;
    padding-right: 9px;
    display: flex;
    align-items: center;
    gap: 4px;
    background: #f2f6fb;
    border-bottom: 1px solid #c8d3de;
`;

const Toggle = styled.button`
    width: 14px;
    height: 13px;
    display: grid;
    place-items: center;
    background: #cfe6fb;
    border: 1px solid #3b93e0;
`;

const FindLabel = styled.label`
    position: relative;
    flex: 1;
    min-width: 0;
    height: 13px;
    display: flex;
    align-items: center;
    gap: 2px;
    white-space: nowrap;
    input {
        flex: 1;
        min-width: 0;
        height: 13px;
        padding-left: 3px;
        background: #fff;
        border: 1px solid #d0dbe6;
    }
`;

const FindMark = styled(Mark)`
    left: 14px;
    top: -3px;
    width: 49px;
    height: 21px;
`;

const DialogBody = styled.div`
    flex: 1;
    min-height: 0;
    display: flex;
`;

const OptionList = styled.div`
    flex: 1;
    padding-left: 3px;
    clip-path: inset(0 0 0 -10px);
`;

const Option = styled.label`
    position: relative;
    height: 10px;
    display: flex;
    align-items: center;
    gap: 2px;
    white-space: nowrap;
`;

const OptionMark = styled(Mark)`
    left: -9px;
    top: -2px;
    width: 59px;
    height: 13px;
`;

const options = [
    "成立日期", "停用日期", "最近交易日期", "营业执照到期日期", "营业执照生效日期",
    "最近收款日期", "变更日期", "法人委托书到期日期", "法人委托书生效日期", "销售定金比例",
    "佣金比率(%)", "直营专柜结算扣率", "保险费率(%)", "应收余额", "生产/经营许可证预警天数",
];

const FieldPicker = () => (
    <Dialog>
        <DialogTitle>
            <span>字段选择器</span>
            <button aria-label="最小化"><Icon name="min" size={6} /></button>
            <button aria-label="最大化"><Icon name="max" size={6} /></button>
            <button aria-label="关闭"><Icon name="close" size={6} /></button>
        </DialogTitle>
        <DialogBar>
            <Toggle aria-label="列"><Icon name="columns" size={9} /></Toggle>
            <button aria-label="属性"><Icon name="props" /></button>
            <BarLine />
            <FindLabel>
                查找
                <input defaultValue="停用日期" />
                <FindMark />
            </FindLabel>
            <button aria-label="筛选"><Icon name="filter" size={9} /></button>
            <button aria-label="备注"><Icon name="note" /></button>
        </DialogBar>
        <DialogBody>
            <OptionList>
                {options.map((text) => (
                    <Option key={text}>
                        <CheckBox defaultChecked={text === "停用日期"} />
                        {text}
                        {text === "停用日期" && <OptionMark />}
                    </Option>
                ))}
            </OptionList>
            <ScrollBar>
                <ScrollButton aria-label="向上"><Icon name="caretUp" size={5} /></ScrollButton>
                <ScrollThumb $start="96px" $size="18px" />
                <ScrollButton aria-label="向下"><Icon name="caret" size={5} /></ScrollButton>
            </ScrollBar>
        </DialogBody>
    </Dialog>
);

//================================ Floating parts =================================

const ImeBar = styled.div`
    position: absolute;
    right: 8px;
    top: 331px;
    height: 15px;
    padding: 0 3px 0 21px;
    display: flex;
    align-items: center;
    gap: 4px;
    background: #fbfdff;
    border: 1px solid #c9d2dc;
    color: #1c73c9;
    font-size: 9px;
    font-weight: bold;
`;

const ImeLogo = styled.svg`
    position: absolute;
    left: -2px;
    top: -2px;
`;

const Watermark = styled.div`
    position: absolute;
    right: 47px;
    bottom: 4px;
    color: #b4b4b4;
    font-family: "Open Sans", "Noto Sans CJK SC", sans-serif;
    font-size: 9px;
    line-height: 14px;
    strong {
        display: block;
        font-size: 12px;
        font-weight: normal;
    }
`;

const App = () => (
    <Page>
        <GlobalStyle />
        <TitleBar>
            <Brand>用友 U8</Brand>
            <span>[999](default)星空演示</span>
            <ServiceLink><Icon name="service2" size={7} />客户服务</ServiceLink>
            <WindowButtons>
                <Icon name="help" size={6} />
                <Icon name="caret" size={6} />
                <Icon name="min" size={6} />
                <Icon name="max" size={6} />
                <Icon name="close" size={6} />
            </WindowButtons>
        </TitleBar>
        <Body>
            <SideRail />
            <TreeSide />
            <Main>
                <Tabs />
                <MainToolbar />
                <Sheet>
                    <TopArea>
                        <HeadForm>
                            <Field blue label="申请编号" value="0000000007" />
                            <Field blue label="申请类型" value="新增客户申请" />
                            <Field label="申请部门" />
                            <Field label="业务员" />
                            <Field label="申请日期" value="2015-02-01" />
                        </HeadForm>
                        <GridSide>
                            <GridIcons />
                            <CustomerGrid />
                        </GridSide>
                    </TopArea>
                    <SheetTabs>
                        <button>基本</button>
                        <button>客户银行</button>
                        <button>客户地址</button>
                        <button>客户开票单位</button>
                        <button>附件</button>
                    </SheetTabs>
                    <DetailPane>
                        <GridIcons marked />
                        <Detail />
                        <Remark>没有显示的字段，可以点击字段选择器按钮，查询需要的字段，勾选显示出来</Remark>
                    </DetailPane>
                    <Footer>
                        <Field label="制单人" value="demo2" />
                        <Field label="审核人" value="demo2" />
                        <span />
                        <span />
                        <Field label="制单日期" value="2015-02-01" />
                        <Field label="审核日期" value="2015-02-01" />
                        <RemarkLabel htmlFor="remark">申请单备注</RemarkLabel>
                        <span />
                        <Field label="制单时间" value="2023-05-19   13:27" />
                        <Field label="审核时间" value="2023-05-19   13:3" />
                        <span />
                        <RemarkInput id="remark" />
                    </Footer>
                </Sheet>
                <FieldPicker />
                <ImeBar>
                    <ImeLogo width="19" height="17" viewBox="0 0 19 17">
                        <path d="M2 3l14-3 2 13-14 3z" fill="#f04e1b" />
                        <path d="M14 4Q6 3 6 6t7 3q1 4-8 3" fill="none" stroke="#fff" strokeWidth="2.2" />
                    </ImeLogo>
                    中
                    <Icon name="punct" size={9} />
                    <Icon name="face" />
                    <Icon name="mic" size={9} />
                    <Icon name="keyboard" />
                    <Icon name="person" size={9} />
                    <Icon name="shirt" size={9} />
                    <Icon name="apps" size={8} />
                </ImeBar>
                <Watermark>
                    <strong>激活 Windows</strong>
                    转到“设置”以激活 Windows。
                </Watermark>
            </Main>
        </Body>
    </Page>
);

export default App;
